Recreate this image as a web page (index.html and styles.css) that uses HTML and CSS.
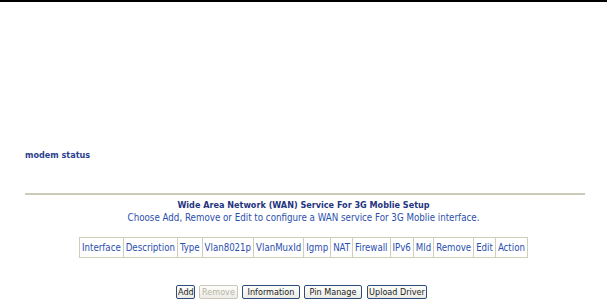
FILE: index.html
```html
<html>
    <head>
        <link rel="stylesheet" href="styles.css">
    </head>
    <body>
        <div class="topbar"></div>
        <div class="status">modem status</div>
        <div class="rule"></div>
        <div class="main">
            <div class="title">Wide Area Network (WAN) Service For 3G Moblie Setup</div>
            <div class="sub">Choose Add, Remove or Edit to configure a WAN service For 3G Moblie interface.</div>
            <table class="wan">
                <tr>
                    <td>Interface</td><td>Description</td><td>Type</td><td>Vlan8021p</td><td>VlanMuxId</td><td>Igmp</td><td>NAT</td><td>Firewall</td><td>IPv6</td><td>Mld</td><td>Remove</td><td>Edit</td><td>Action</td>
                </tr>
            </table>
            <div class="buttons">
                <button class="add">Add</button>
                <button class="remove" disabled>Remove</button>
                <button class="wide">Information</button>
                <button class="wide">Pin Manage</button>
                <button class="wide upload">Upload Driver</button>
            </div>
        </div>
    </body>
</html>
```
FILE: styles.css
```css
body{
    margin: 0;
    background-color: white;
    font-family: "DejaVu Sans Condensed", "DejaVu Sans", sans-serif;
    font-size: 10px;
    color: #2b4a9c;
}
.topbar{
    border-top: 2px solid black;
}
.status{
    margin: 148px 0 0 25px;
    font-weight: bold;
    font-size: 9px;
    color: #2a3f8f;
    height: 14px;
}
.rule{
    margin: 29px 22px 0 25px;
    border-top: 2px solid #cbcbb8;
}
.main{
    display: flex;
    flex-direction: column;
    align-items: center;
}
.title{
    margin-top: 5px;
    font-weight: bold;
    font-size: 9px;
    color: #1f3580;
    height: 12px;
}
.sub{
    height: 13px;
    font-size: 9.7px;
    color: #2b4fae;
}
table.wan{
    margin-top: 12px;
    border-collapse: collapse;
    border: 1px solid #cfcfb8;
}
.wan td{
    border: 1px solid #cfcfb8;
    padding: 4px 2px 4px;
    color: #2b4fae;
    font-size: 9.6px;
    white-space: nowrap;
}
.buttons{
    margin-top: 27px;
    display: flex;
    gap: 4px;
    padding-right: 4px;
}
button{
    font-family: inherit;
    font-size: 9px;
    color: #222;
    background: linear-gradient(#fdfdfb, #ecebe6);
    border: 1px solid #2c4d7c;
    border-radius: 2px;
    height: 14px;
    padding: 0 1px;
    white-space: nowrap;
}
button:disabled{
    color: #b8b4a6;
    border-color: #c9c7ba;
}
button.add{
    width: 19px;
}
button.remove{
    width: 39px;
}
button.wide{
    width: 58px;
}
button.upload{
    width: 60px;
    margin-left: 1px;
}
```
